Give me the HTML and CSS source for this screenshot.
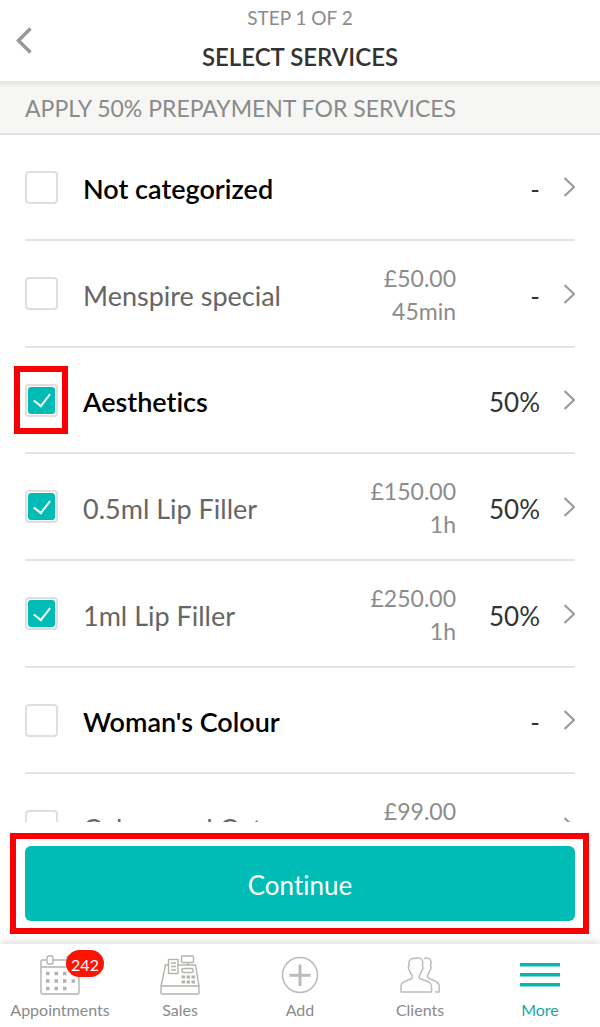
FILE: index.html
```html
<!DOCTYPE html>
<html lang="en">
<head>
<meta charset="utf-8">
<meta name="viewport" content="width=device-width, initial-scale=1">
<title>Select services</title>
<link rel="stylesheet" href="styles.css">
</head>
<body>
<header class="header">
  <button class="back" type="button" aria-label="Back">
    <svg width="16" height="27" viewBox="0 0 16 27"><path d="M14.5 1.5 2.5 13.5l12 12" fill="none" stroke="#999" stroke-width="3.500"/></svg>
  </button>
  <div class="titles">
    <p class="step">STEP 1 OF 2</p>
    <h1 class="title">SELECT SERVICES</h1>
  </div>
</header>
<h2 class="section">APPLY 50% PREPAYMENT FOR SERVICES</h2>
<main class="list">
  <div class="row category">
    <label class="pick"><span class="tick"><input class="box" type="checkbox"></span><span class="name">Not categorized</span></label>
    <button class="rate" type="button"><span class="percent">-</span><svg class="chevron" viewBox="0 0 11 20"><path d="M.5 1 10 10 .5 19"/></svg></button>
  </div>
  <div class="row service">
    <label class="pick"><span class="tick"><input class="box" type="checkbox"></span><span class="name">Menspire special</span></label>
    <div class="cost"><span>£50.00</span><span>45min</span></div>
    <button class="rate" type="button"><span class="percent">-</span><svg class="chevron" viewBox="0 0 11 20"><path d="M.5 1 10 10 .5 19"/></svg></button>
  </div>
  <div class="row category">
    <label class="pick"><span class="tick marked"><input class="box" type="checkbox" checked></span><span class="name">Aesthetics</span></label>
    <button class="rate" type="button"><span class="percent">50%</span><svg class="chevron" viewBox="0 0 11 20"><path d="M.5 1 10 10 .5 19"/></svg></button>
  </div>
  <div class="row service">
    <label class="pick"><span class="tick"><input class="box" type="checkbox" checked></span><span class="name">0.5ml Lip Filler</span></label>
    <div class="cost"><span>£150.00</span><span>1h</span></div>
    <button class="rate" type="button"><span class="percent">50%</span><svg class="chevron" viewBox="0 0 11 20"><path d="M.5 1 10 10 .5 19"/></svg></button>
  </div>
  <div class="row service">
    <label class="pick"><span class="tick"><input class="box" type="checkbox" checked></span><span class="name">1ml Lip Filler</span></label>
    <div class="cost"><span>£250.00</span><span>1h</span></div>
    <button class="rate" type="button"><span class="percent">50%</span><svg class="chevron" viewBox="0 0 11 20"><path d="M.5 1 10 10 .5 19"/></svg></button>
  </div>
  <div class="row category">
    <label class="pick"><span class="tick"><input class="box" type="checkbox"></span><span class="name">Woman's Colour</span></label>
    <button class="rate" type="button"><span class="percent">-</span><svg class="chevron" viewBox="0 0 11 20"><path d="M.5 1 10 10 .5 19"/></svg></button>
  </div>
  <div class="row service">
    <label class="pick"><span class="tick"><input class="box" type="checkbox"></span><span class="name">Colour and Cut</span></label>
    <div class="cost"><span>£99.00</span><span>1h</span></div>
    <button class="rate" type="button"><span class="percent">-</span><svg class="chevron" viewBox="0 0 11 20"><path d="M.5 1 10 10 .5 19"/></svg></button>
  </div>
</main>
<div class="action">
  <div class="action-frame"><button class="continue" type="button">Continue</button></div>
</div>
<nav class="tabs">
  <a class="tab" href="#appointments">
    <span class="icon">
      <svg width="40" height="40" viewBox="0 0 40 40" fill="none" stroke="#b3b3ae" stroke-width="1.4"><path d="M6 5H2.500Q1 5 1 6.500V37.500Q1 39 2.500 39H37.500Q39 39 39 37.500V6.500Q39 5 37.500 5H34M13 5H27M1 12H39"/><rect x="7" y="1" width="6" height="8" rx="1.500"/><rect x="27" y="1" width="6" height="8" rx="1.500"/><path d="M6 18.500H36M6 26H36M6 33.500H28" stroke-width="3.500" stroke-dasharray="3.500 5"/></svg>
      <span class="badge">242</span>
    </span>
    <span>Appointments</span>
  </a>
  <a class="tab" href="#sales">
    <span class="icon">
      <svg width="40" height="40" viewBox="0 0 40 40" fill="none" stroke="#b3b3ae" stroke-width="1.400"><path d="M8 10H5.500L1 31V38Q1 39 2 39H38Q39 39 39 38V31L35.500 10H18M1 31H39M28 7.500V10"/><rect x="8.500" y="4.500" width="9.500" height="14" fill="#fff"/><path d="M11 8h5M11 11.500h5M11 15h5"/><rect x="21.500" y="1" width="12" height="6.500" rx="1"/><rect x="22" y="13.500" width="11" height="4" rx="1"/><path d="M21.500 22H35M21.500 27H35" stroke-width="3" stroke-dasharray="3.500 1.500"/></svg>
    </span>
    <span>Sales</span>
  </a>
  <a class="tab" href="#add">
    <span class="icon">
      <svg width="40" height="40" viewBox="0 0 40 40" fill="none" stroke="#bbb"><circle cx="20" cy="20" r="17.500" stroke-width="1.500"/><path d="M20 9.500V31M9.500 20.300H30.500" stroke-width="3"/></svg>
    </span>
    <span>Add</span>
  </a>
  <a class="tab" href="#clients">
    <span class="icon">
      <svg width="40" height="40" viewBox="0 0 40 40" fill="none" stroke="#bdbdba" stroke-width="1.500" stroke-linejoin="round"><path d="M1 37V31C1 27.500 4 26.500 7 25.500L11.500 23.500C12.500 23 12.500 21 11.500 19.500C10 18 9.500 16.500 9.500 15C8 14.500 8 11.500 9 11C8.500 8 8.500 6 10.500 4.500C12 3 14 4 16 3C19 2.500 22 3.500 22.500 6C23 8 22.500 9.500 22.500 11C23.500 12 23 14.500 22 15C21.500 17 21 18.500 20 19.500C19 21 19 23 20 23.500L25 25.500C29 27 31.500 28 31.500 31.500V37Z"/><path d="M24 3.500C27 2 31 3.500 31 7C31.500 9 30.500 10.500 30.500 11C31.500 12 31 14.500 30 15C29.500 17.500 29 18.500 28 19.500C27 21 27.500 23 29 23.500L34 25.500C38 27 39.200 29 39.200 31.500V37H35"/></svg>
    </span>
    <span>Clients</span>
  </a>
  <a class="tab active" href="#more" aria-current="page">
    <span class="icon">
      <svg width="40" height="40" viewBox="0 0 40 40" stroke="#0bb5ad" stroke-width="3.400"><path d="M0 9.700H40M0 19.700H40M0 29.700H40"/></svg>
    </span>
    <span>More</span>
  </a>
</nav>
</body>
</html>
```
FILE: styles.css
```css
* { box-sizing: border-box; }
body {
  margin: 0;
  height: 100vh;
  display: flex;
  flex-direction: column;
  background: #fff;
  color: #333;
  font-family: Lato, "Open Sans", sans-serif;
  font-variant-ligatures: none;
}
button {
  font: inherit;
  font-variant-ligatures: none;
  color: inherit;
  background: none;
  border: 0;
  padding: 0;
}
.header {
  display: grid;
  grid-template-columns: 60px 1fr 60px;
  flex: none;
  align-items: center;
  padding-bottom: 3px;
  border-bottom: 1px solid #e2e2e0;
}
.back {
  display: flex;
  padding: 2px 0 0 16px;
}
.titles { text-align: center; }
.step {
  margin: 0;
  font-size: 19px;
  line-height: 36px;
  color: #8a8a8a;
}
.title {
  margin: 0;
  font-size: 24px;
  line-height: 42px;
  font-weight: 600;
}
.section {
  flex: none;
  margin: 0;
  padding: 0 25px;
  height: 53px;
  font-size: 23px;
  line-height: 52px;
  font-weight: 400;
  color: #8a8a8a;
  background: linear-gradient(#e6e6e5, #f6f6f5 6px);
  border-bottom: 2px solid #e2e2e1;
}
.list {
  flex: 1;
  min-height: 0;
  overflow-y: auto;
  scrollbar-width: none;
  padding: 0 25px;
}
.row {
  display: flex;
  align-items: center;
  border-bottom: 2px solid #e4e4e4;
}
.category { height: 106px; }
.service { height: 107px; }
.pick {
  flex: 1;
  display: flex;
  align-items: center;
  gap: 25px;
}
.name {
  padding-top: 4px;
  font-size: 27px;
  line-height: 32px;
  color: #666;
}
.category .name {
  font-weight: 600;
  color: #000;
}
.tick {
  position: relative;
  display: flex;
}
.marked::after {
  content: "";
  position: absolute;
  inset: -18px -10px -17px -11px;
  border: 6px solid #fb0000;
  pointer-events: none;
}
.box {
  appearance: none;
  display: grid;
  place-items: center;
  margin: 0;
  width: 33px;
  height: 33px;
  border: 2px solid #dfdfdf;
  border-radius: 4px;
}
.box:checked::before,
.box:checked::after {
  content: "";
  grid-area: 1 / 1;
}
.box:checked::before {
  width: 27px;
  height: 27px;
  border-radius: 3px;
  background: #00bcb6;
}
.box:checked::after {
  width: 8px;
  height: 14px;
  margin-bottom: 4px;
  border: solid #fff;
  border-width: 0 2px 2px 0;
  transform: rotate(38deg);
}
.cost {
  display: flex;
  flex-direction: column;
  padding-top: 3px;
  text-align: right;
  font-size: 23px;
  line-height: 33px;
  color: #8c8c8c;
}
.rate {
  display: flex;
  align-items: center;
  justify-content: flex-end;
  gap: 24px;
  width: 119px;
}
.percent {
  padding-top: 4px;
  font-size: 26px;
  line-height: 32px;
}
.chevron {
  width: 11px;
  height: 20px;
  fill: none;
  stroke: #999;
  stroke-width: 2;
}
.action {
  flex: none;
  padding: 24px 25px 23px;
}
.action-frame { position: relative; }
.action-frame::after {
  content: "";
  position: absolute;
  inset: -13px -14px -13px -15px;
  border: 6px solid #fb0000;
  pointer-events: none;
}
.continue {
  display: block;
  width: 100%;
  height: 75px;
  padding-top: 2px;
  border-radius: 6px;
  background: #00bcb6;
  color: #fff;
  font-size: 26px;
}
.tabs {
  flex: none;
  display: grid;
  grid-template-columns: repeat(5, 1fr);
  height: 83px;
  padding-top: 11px;
  box-shadow: 0 -2px 8px #00000024;
}
.tab {
  display: flex;
  flex-direction: column;
  align-items: center;
  gap: 3px;
  font-size: 16px;
  line-height: 24px;
  color: #8a8a8a;
  text-decoration: none;
}
.icon {
  position: relative;
  display: flex;
}
.badge {
  position: absolute;
  top: -5px;
  left: 26px;
  width: 38px;
  padding-top: 2px;
  border-radius: 14px;
  background: #fb1404;
  color: #fff;
  font-size: 16px;
  line-height: 25px;
  text-align: center;
}
.active { color: #14a99f; }
```
